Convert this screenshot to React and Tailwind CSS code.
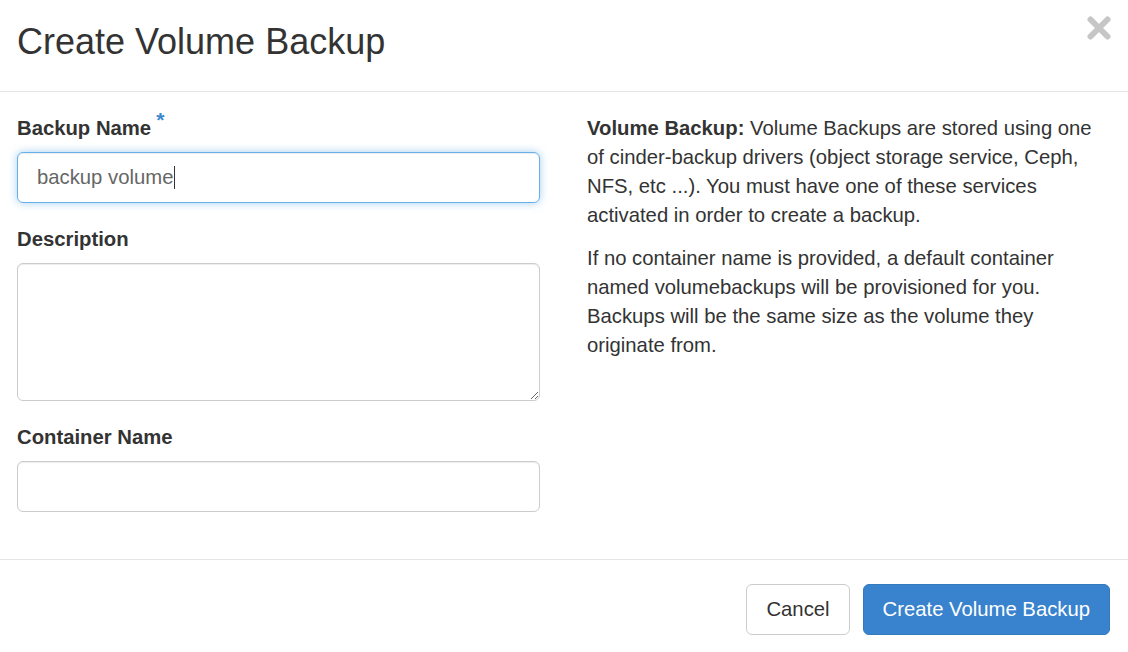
const font = { fontFamily: '"Liberation Sans", Arial, sans-serif' }

function Label({ children, required }) {
  return (
    <label className="block text-[20.3px] leading-[29px] font-bold text-[#333] mb-[9px]">
      {children}
      {required && (
        <span className="relative -top-[8px] ml-[5px] text-[21px] leading-none text-[#3a87d0]">*</span>
      )}
    </label>
  )
}

function CloseIcon() {
  return (
    <svg width="24" height="24" viewBox="0 0 24 24" className="block">
      <path d="M3.5 3.5 L20.5 20.5 M20.5 3.5 L3.5 20.5" stroke="#c6c6c6" strokeWidth="6" strokeLinecap="round" />
    </svg>
  )
}

export default function App() {
  return (
    <div className="w-[1128px] h-[652px] bg-white text-[#333] overflow-hidden" style={font}>
      <div className="h-[92px] border-b border-[#e5e5e5] flex items-start justify-between pl-[17px] pr-[17px]">
        <h4 className="pt-[17px] text-[36px] leading-[50px] font-normal text-[#333]">Create Volume Backup</h4>
        <button className="mt-[16px]">
          <CloseIcon />
        </button>
      </div>

      <div className="grid grid-cols-[523px_523px] gap-x-[47px] px-[17px] pt-[22px] h-[468px] border-b border-[#e5e5e5]">
        <div>
          <div className="mb-[22px]">
            <Label required>Backup Name</Label>
            <div className="h-[51px] rounded-[6px] border border-[#66afe9] shadow-[inset_0_1px_1px_rgba(0,0,0,0.075),0_0_8px_rgba(102,175,233,0.6)] px-[19px] flex items-center text-[20.3px] text-[#666]">
              <span>backup volume</span>
              <span className="inline-block w-px h-[23px] bg-[#333] ml-px" />
            </div>
          </div>
          <div className="mb-[22px]">
            <Label>Description</Label>
            <textarea className="block w-full h-[138px] rounded-[6px] border border-[#ccc] shadow-[inset_0_1px_1px_rgba(0,0,0,0.075)] px-[19px] py-[9px] text-[20.3px] outline-none" />
          </div>
          <div>
            <Label>Container Name</Label>
            <div className="h-[51px] rounded-[6px] border border-[#ccc] shadow-[inset_0_1px_1px_rgba(0,0,0,0.075)]" />
          </div>
        </div>

        <div className="text-[20.3px] leading-[29px] text-[#333]">
          <p className="mb-[14px]">
            <strong>Volume Backup:</strong> Volume Backups are stored using one of cinder-backup drivers
            (object storage service, Ceph, NFS, etc ...). You must have one of these services activated in
            order to create a backup.
          </p>
          <p>
            If no container name is provided, a default container named volumebackups will be provisioned
            for you. Backups will be the same size as the volume they originate from.
          </p>
        </div>
      </div>

      <div className="flex justify-end gap-[13px] pt-[24px] pr-[18px]">
        <button className="h-[51px] px-[19px] rounded-[6px] border border-[#ccc] bg-white text-[20.3px] text-[#333]">
          Cancel
        </button>
        <button className="h-[51px] px-[19px] rounded-[6px] border border-[#3579bd] bg-[#3983ce] text-[20.3px] text-white">
          Create Volume Backup
        </button>
      </div>
    </div>
  )
}
